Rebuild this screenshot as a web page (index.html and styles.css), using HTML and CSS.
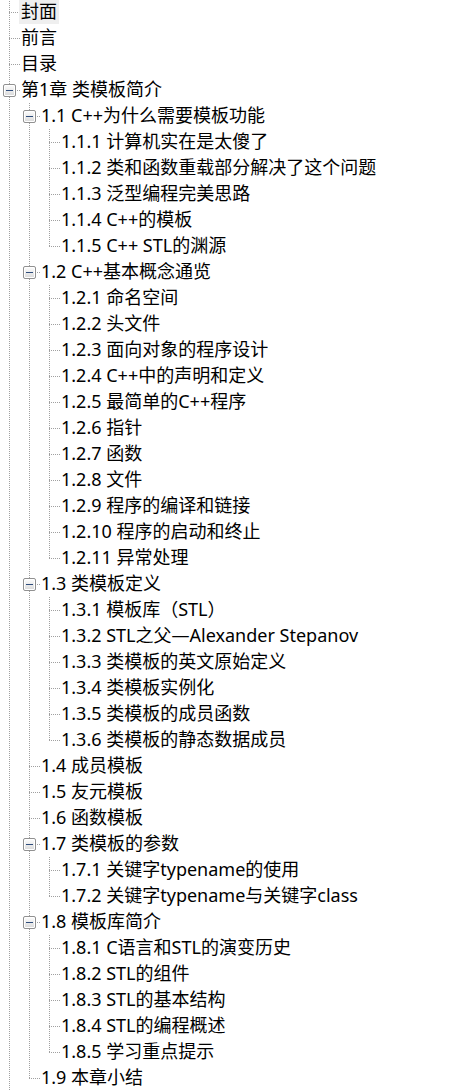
FILE: index.html
```html
<!DOCTYPE html>
<html lang="zh">
<head>
<meta charset="utf-8">
<title>目录</title>
<link rel="stylesheet" href="styles.css">
</head>
<body>
<div class="tree">
  <div class="row"><span class="g t"></span><span class="lbl sel">封面</span></div>
  <div class="row"><span class="g t"></span><span class="lbl">前言</span></div>
  <div class="row"><span class="g t"></span><span class="lbl">目录</span></div>
  <div class="row"><span class="g t"><span class="box"></span></span><span class="lbl">第1章 类模板简介</span></div>

  <div class="row"><span class="g v"></span><span class="g t"><span class="box"></span></span><span class="lbl">1.1 C++为什么需要模板功能</span></div>
  <div class="row"><span class="g v"></span><span class="g v"></span><span class="g t"></span><span class="lbl">1.1.1 计算机实在是太傻了</span></div>
  <div class="row"><span class="g v"></span><span class="g v"></span><span class="g t"></span><span class="lbl">1.1.2 类和函数重载部分解决了这个问题</span></div>
  <div class="row"><span class="g v"></span><span class="g v"></span><span class="g t"></span><span class="lbl">1.1.3 泛型编程完美思路</span></div>
  <div class="row"><span class="g v"></span><span class="g v"></span><span class="g t"></span><span class="lbl">1.1.4 C++的模板</span></div>
  <div class="row"><span class="g v"></span><span class="g v"></span><span class="g l"></span><span class="lbl">1.1.5 C++ STL的渊源</span></div>

  <div class="row"><span class="g v"></span><span class="g t"><span class="box"></span></span><span class="lbl">1.2 C++基本概念通览</span></div>
  <div class="row"><span class="g v"></span><span class="g v"></span><span class="g t"></span><span class="lbl">1.2.1 命名空间</span></div>
  <div class="row"><span class="g v"></span><span class="g v"></span><span class="g t"></span><span class="lbl">1.2.2 头文件</span></div>
  <div class="row"><span class="g v"></span><span class="g v"></span><span class="g t"></span><span class="lbl">1.2.3 面向对象的程序设计</span></div>
  <div class="row"><span class="g v"></span><span class="g v"></span><span class="g t"></span><span class="lbl">1.2.4 C++中的声明和定义</span></div>
  <div class="row"><span class="g v"></span><span class="g v"></span><span class="g t"></span><span class="lbl">1.2.5 最简单的C++程序</span></div>
  <div class="row"><span class="g v"></span><span class="g v"></span><span class="g t"></span><span class="lbl">1.2.6 指针</span></div>
  <div class="row"><span class="g v"></span><span class="g v"></span><span class="g t"></span><span class="lbl">1.2.7 函数</span></div>
  <div class="row"><span class="g v"></span><span class="g v"></span><span class="g t"></span><span class="lbl">1.2.8 文件</span></div>
  <div class="row"><span class="g v"></span><span class="g v"></span><span class="g t"></span><span class="lbl">1.2.9 程序的编译和链接</span></div>
  <div class="row"><span class="g v"></span><span class="g v"></span><span class="g t"></span><span class="lbl">1.2.10 程序的启动和终止</span></div>
  <div class="row"><span class="g v"></span><span class="g v"></span><span class="g l"></span><span class="lbl">1.2.11 异常处理</span></div>

  <div class="row"><span class="g v"></span><span class="g t"><span class="box"></span></span><span class="lbl">1.3 类模板定义</span></div>
  <div class="row"><span class="g v"></span><span class="g v"></span><span class="g t"></span><span class="lbl">1.3.1 模板库（STL）</span></div>
  <div class="row"><span class="g v"></span><span class="g v"></span><span class="g t"></span><span class="lbl">1.3.2 STL之父—Alexander Stepanov</span></div>
  <div class="row"><span class="g v"></span><span class="g v"></span><span class="g t"></span><span class="lbl">1.3.3 类模板的英文原始定义</span></div>
  <div class="row"><span class="g v"></span><span class="g v"></span><span class="g t"></span><span class="lbl">1.3.4 类模板实例化</span></div>
  <div class="row"><span class="g v"></span><span class="g v"></span><span class="g t"></span><span class="lbl">1.3.5 类模板的成员函数</span></div>
  <div class="row"><span class="g v"></span><span class="g v"></span><span class="g l"></span><span class="lbl">1.3.6 类模板的静态数据成员</span></div>

  <div class="row"><span class="g v"></span><span class="g t"></span><span class="lbl">1.4 成员模板</span></div>
  <div class="row"><span class="g v"></span><span class="g t"></span><span class="lbl">1.5 友元模板</span></div>
  <div class="row"><span class="g v"></span><span class="g t"></span><span class="lbl">1.6 函数模板</span></div>

  <div class="row"><span class="g v"></span><span class="g t"><span class="box"></span></span><span class="lbl">1.7 类模板的参数</span></div>
  <div class="row"><span class="g v"></span><span class="g v"></span><span class="g t"></span><span class="lbl">1.7.1 关键字typename的使用</span></div>
  <div class="row"><span class="g v"></span><span class="g v"></span><span class="g l"></span><span class="lbl">1.7.2 关键字typename与关键字class</span></div>

  <div class="row"><span class="g v"></span><span class="g t"><span class="box"></span></span><span class="lbl">1.8 模板库简介</span></div>
  <div class="row"><span class="g v"></span><span class="g v"></span><span class="g t"></span><span class="lbl">1.8.1 C语言和STL的演变历史</span></div>
  <div class="row"><span class="g v"></span><span class="g v"></span><span class="g t"></span><span class="lbl">1.8.2 STL的组件</span></div>
  <div class="row"><span class="g v"></span><span class="g v"></span><span class="g t"></span><span class="lbl">1.8.3 STL的基本结构</span></div>
  <div class="row"><span class="g v"></span><span class="g v"></span><span class="g t"></span><span class="lbl">1.8.4 STL的编程概述</span></div>
  <div class="row"><span class="g v"></span><span class="g v"></span><span class="g l"></span><span class="lbl">1.8.5 学习重点提示</span></div>

  <div class="row"><span class="g v"></span><span class="g l"></span><span class="lbl">1.9 本章小结</span></div>
  <div class="row"><span class="g v"></span></div>
</div>
</body>
</html>
```

FILE: styles.css
```css
html, body {
  margin: 0;
  padding: 0;
  background: #ffffff;
}

body {
  font-family: "Noto Sans", "Noto Sans CJK SC", sans-serif;
  font-size: 18px;
  color: #000000;
  overflow: hidden;
  --dv: repeating-linear-gradient(to bottom, #a0a0a0 0 1px, transparent 1px 2px);
  --dh: repeating-linear-gradient(to right, #a0a0a0 0 1px, transparent 1px 2px);
}

.tree {
  margin-top: -1px;
}

.row {
  display: flex;
  align-items: center;
  height: 26px;
}

.g {
  flex: none;
  display: flex;
  width: 20px;
  height: 26px;
  background-repeat: no-repeat;
}

.v {
  background-image: var(--dv);
  background-size: 1px 26px;
  background-position: 9px 0;
}

.t {
  background-image: var(--dv), var(--dh);
  background-size: 1px 26px, 11px 1px;
  background-position: 9px 0, 9px 13px;
}

.l {
  background-image: var(--dv), var(--dh);
  background-size: 1px 14px, 11px 1px;
  background-position: 9px 0, 9px 13px;
}

.box {
  box-sizing: border-box;
  display: flex;
  align-items: center;
  justify-content: center;
  width: 13px;
  height: 13px;
  margin: 7px 0 0 3px;
  border: 1px solid #919191;
  border-radius: 2px;
  background: linear-gradient(#fdfdfd, #d9d9d9);
  box-shadow: inset 0 0 0 1px #ffffff;
}

.box::before {
  content: "";
  width: 7px;
  height: 1px;
  background: #2f4d7c;
}

.lbl {
  box-sizing: border-box;
  height: 24px;
  line-height: 22px;
  padding: 0 2px 2px;
  margin-left: -1px;
  white-space: nowrap;
}

.sel {
  background: #efefef;
}
```
